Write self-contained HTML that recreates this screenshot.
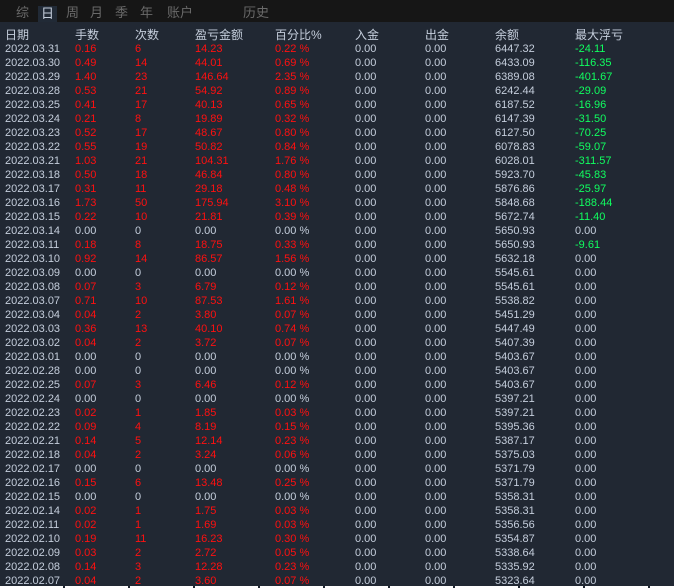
<!DOCTYPE html>
<html><head><meta charset="utf-8"><style>
body{margin:0;width:674px;height:588px;background:#212833;overflow:hidden;font-family:"Liberation Sans","Noto Sans CJK SC",sans-serif;font-size:11px;color:#c5cedc;position:relative}
.top{position:absolute;left:0;top:0;width:674px;height:22px;background:#161616}
.tab{position:absolute;top:5px;font-size:13px;color:#6a6a6a;line-height:16px}
.sel{background:#212a36;color:#c5cedc;padding:0 3px;top:6px;height:16px}
.rows{position:absolute;left:5px;top:28px}
.r{height:14px;line-height:14px;display:flex;white-space:nowrap}
.h{font-size:12px;height:14px}
.r span{display:block}
.r span:nth-child(1){width:70px}.r span:nth-child(2){width:60px}.r span:nth-child(3){width:60px}.r span:nth-child(4){width:80px}.r span:nth-child(5){width:80px}.r span:nth-child(6){width:70px}.r span:nth-child(7){width:70px}.r span:nth-child(8){width:80px}
.d span:nth-child(2),.d span:nth-child(3),.d span:nth-child(4),.d span:nth-child(5){color:#ff1010}
.z span:nth-child(2),.z span:nth-child(3),.z span:nth-child(4),.z span:nth-child(5){color:#c5cedc}
.g{color:#10ff60}
.bl{position:absolute;left:0;top:586px;width:674px;height:2px;background:repeating-linear-gradient(90deg,#fff 0 63px,#212833 63px 65px)}
</style></head><body>
<div class="top"></div>
<div class="tab" style="left:16px">综</div>
<div class="tab sel" style="left:38px">日</div>
<div class="tab" style="left:66px">周</div>
<div class="tab" style="left:90px">月</div>
<div class="tab" style="left:115px">季</div>
<div class="tab" style="left:140px">年</div>
<div class="tab" style="left:167px">账户</div>
<div class="tab" style="left:243px">历史</div>
<div class="rows">
<div class="r h"><span>日期</span><span>手数</span><span>次数</span><span>盈亏金额</span><span>百分比%</span><span>入金</span><span>出金</span><span>余额</span><span>最大浮亏</span></div>
<div class="r d"><span>2022.03.31</span><span>0.16</span><span>6</span><span>14.23</span><span>0.22 %</span><span>0.00</span><span>0.00</span><span>6447.32</span><span class="g">-24.11</span></div>
<div class="r d"><span>2022.03.30</span><span>0.49</span><span>14</span><span>44.01</span><span>0.69 %</span><span>0.00</span><span>0.00</span><span>6433.09</span><span class="g">-116.35</span></div>
<div class="r d"><span>2022.03.29</span><span>1.40</span><span>23</span><span>146.64</span><span>2.35 %</span><span>0.00</span><span>0.00</span><span>6389.08</span><span class="g">-401.67</span></div>
<div class="r d"><span>2022.03.28</span><span>0.53</span><span>21</span><span>54.92</span><span>0.89 %</span><span>0.00</span><span>0.00</span><span>6242.44</span><span class="g">-29.09</span></div>
<div class="r d"><span>2022.03.25</span><span>0.41</span><span>17</span><span>40.13</span><span>0.65 %</span><span>0.00</span><span>0.00</span><span>6187.52</span><span class="g">-16.96</span></div>
<div class="r d"><span>2022.03.24</span><span>0.21</span><span>8</span><span>19.89</span><span>0.32 %</span><span>0.00</span><span>0.00</span><span>6147.39</span><span class="g">-31.50</span></div>
<div class="r d"><span>2022.03.23</span><span>0.52</span><span>17</span><span>48.67</span><span>0.80 %</span><span>0.00</span><span>0.00</span><span>6127.50</span><span class="g">-70.25</span></div>
<div class="r d"><span>2022.03.22</span><span>0.55</span><span>19</span><span>50.82</span><span>0.84 %</span><span>0.00</span><span>0.00</span><span>6078.83</span><span class="g">-59.07</span></div>
<div class="r d"><span>2022.03.21</span><span>1.03</span><span>21</span><span>104.31</span><span>1.76 %</span><span>0.00</span><span>0.00</span><span>6028.01</span><span class="g">-311.57</span></div>
<div class="r d"><span>2022.03.18</span><span>0.50</span><span>18</span><span>46.84</span><span>0.80 %</span><span>0.00</span><span>0.00</span><span>5923.70</span><span class="g">-45.83</span></div>
<div class="r d"><span>2022.03.17</span><span>0.31</span><span>11</span><span>29.18</span><span>0.48 %</span><span>0.00</span><span>0.00</span><span>5876.86</span><span class="g">-25.97</span></div>
<div class="r d"><span>2022.03.16</span><span>1.73</span><span>50</span><span>175.94</span><span>3.10 %</span><span>0.00</span><span>0.00</span><span>5848.68</span><span class="g">-188.44</span></div>
<div class="r d"><span>2022.03.15</span><span>0.22</span><span>10</span><span>21.81</span><span>0.39 %</span><span>0.00</span><span>0.00</span><span>5672.74</span><span class="g">-11.40</span></div>
<div class="r d z"><span>2022.03.14</span><span>0.00</span><span>0</span><span>0.00</span><span>0.00 %</span><span>0.00</span><span>0.00</span><span>5650.93</span><span>0.00</span></div>
<div class="r d"><span>2022.03.11</span><span>0.18</span><span>8</span><span>18.75</span><span>0.33 %</span><span>0.00</span><span>0.00</span><span>5650.93</span><span class="g">-9.61</span></div>
<div class="r d"><span>2022.03.10</span><span>0.92</span><span>14</span><span>86.57</span><span>1.56 %</span><span>0.00</span><span>0.00</span><span>5632.18</span><span>0.00</span></div>
<div class="r d z"><span>2022.03.09</span><span>0.00</span><span>0</span><span>0.00</span><span>0.00 %</span><span>0.00</span><span>0.00</span><span>5545.61</span><span>0.00</span></div>
<div class="r d"><span>2022.03.08</span><span>0.07</span><span>3</span><span>6.79</span><span>0.12 %</span><span>0.00</span><span>0.00</span><span>5545.61</span><span>0.00</span></div>
<div class="r d"><span>2022.03.07</span><span>0.71</span><span>10</span><span>87.53</span><span>1.61 %</span><span>0.00</span><span>0.00</span><span>5538.82</span><span>0.00</span></div>
<div class="r d"><span>2022.03.04</span><span>0.04</span><span>2</span><span>3.80</span><span>0.07 %</span><span>0.00</span><span>0.00</span><span>5451.29</span><span>0.00</span></div>
<div class="r d"><span>2022.03.03</span><span>0.36</span><span>13</span><span>40.10</span><span>0.74 %</span><span>0.00</span><span>0.00</span><span>5447.49</span><span>0.00</span></div>
<div class="r d"><span>2022.03.02</span><span>0.04</span><span>2</span><span>3.72</span><span>0.07 %</span><span>0.00</span><span>0.00</span><span>5407.39</span><span>0.00</span></div>
<div class="r d z"><span>2022.03.01</span><span>0.00</span><span>0</span><span>0.00</span><span>0.00 %</span><span>0.00</span><span>0.00</span><span>5403.67</span><span>0.00</span></div>
<div class="r d z"><span>2022.02.28</span><span>0.00</span><span>0</span><span>0.00</span><span>0.00 %</span><span>0.00</span><span>0.00</span><span>5403.67</span><span>0.00</span></div>
<div class="r d"><span>2022.02.25</span><span>0.07</span><span>3</span><span>6.46</span><span>0.12 %</span><span>0.00</span><span>0.00</span><span>5403.67</span><span>0.00</span></div>
<div class="r d z"><span>2022.02.24</span><span>0.00</span><span>0</span><span>0.00</span><span>0.00 %</span><span>0.00</span><span>0.00</span><span>5397.21</span><span>0.00</span></div>
<div class="r d"><span>2022.02.23</span><span>0.02</span><span>1</span><span>1.85</span><span>0.03 %</span><span>0.00</span><span>0.00</span><span>5397.21</span><span>0.00</span></div>
<div class="r d"><span>2022.02.22</span><span>0.09</span><span>4</span><span>8.19</span><span>0.15 %</span><span>0.00</span><span>0.00</span><span>5395.36</span><span>0.00</span></div>
<div class="r d"><span>2022.02.21</span><span>0.14</span><span>5</span><span>12.14</span><span>0.23 %</span><span>0.00</span><span>0.00</span><span>5387.17</span><span>0.00</span></div>
<div class="r d"><span>2022.02.18</span><span>0.04</span><span>2</span><span>3.24</span><span>0.06 %</span><span>0.00</span><span>0.00</span><span>5375.03</span><span>0.00</span></div>
<div class="r d z"><span>2022.02.17</span><span>0.00</span><span>0</span><span>0.00</span><span>0.00 %</span><span>0.00</span><span>0.00</span><span>5371.79</span><span>0.00</span></div>
<div class="r d"><span>2022.02.16</span><span>0.15</span><span>6</span><span>13.48</span><span>0.25 %</span><span>0.00</span><span>0.00</span><span>5371.79</span><span>0.00</span></div>
<div class="r d z"><span>2022.02.15</span><span>0.00</span><span>0</span><span>0.00</span><span>0.00 %</span><span>0.00</span><span>0.00</span><span>5358.31</span><span>0.00</span></div>
<div class="r d"><span>2022.02.14</span><span>0.02</span><span>1</span><span>1.75</span><span>0.03 %</span><span>0.00</span><span>0.00</span><span>5358.31</span><span>0.00</span></div>
<div class="r d"><span>2022.02.11</span><span>0.02</span><span>1</span><span>1.69</span><span>0.03 %</span><span>0.00</span><span>0.00</span><span>5356.56</span><span>0.00</span></div>
<div class="r d"><span>2022.02.10</span><span>0.19</span><span>11</span><span>16.23</span><span>0.30 %</span><span>0.00</span><span>0.00</span><span>5354.87</span><span>0.00</span></div>
<div class="r d"><span>2022.02.09</span><span>0.03</span><span>2</span><span>2.72</span><span>0.05 %</span><span>0.00</span><span>0.00</span><span>5338.64</span><span>0.00</span></div>
<div class="r d"><span>2022.02.08</span><span>0.14</span><span>3</span><span>12.28</span><span>0.23 %</span><span>0.00</span><span>0.00</span><span>5335.92</span><span>0.00</span></div>
<div class="r d"><span>2022.02.07</span><span>0.04</span><span>2</span><span>3.60</span><span>0.07 %</span><span>0.00</span><span>0.00</span><span>5323.64</span><span>0.00</span></div>
</div>
<div class="bl"></div>
</body></html>
